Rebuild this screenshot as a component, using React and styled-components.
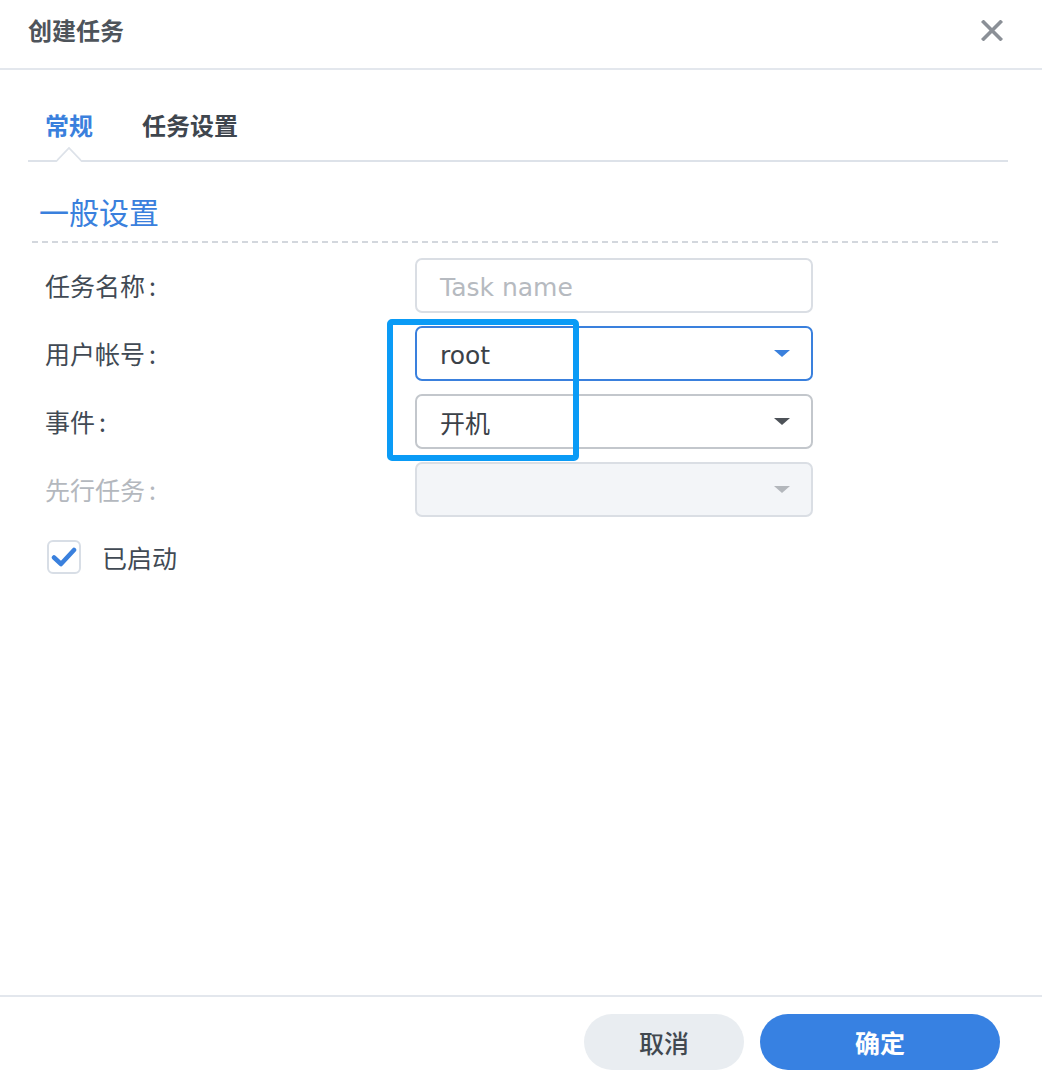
import React from 'react';
import styled, { createGlobalStyle } from 'styled-components';

const GlobalStyle = createGlobalStyle`
  html, body, #root {
    margin: 0;
    padding: 0;
    height: 100%;
    background: #ffffff;
  }
  body {
    font-family: "Noto Sans CJK SC", "Noto Sans", sans-serif;
    color: #414a54;
  }
  * {
    box-sizing: border-box;
  }
`;

const Dialog = styled.div`
  display: flex;
  flex-direction: column;
  height: 100vh;
  background: #ffffff;
`;

const Header = styled.div`
  display: flex;
  align-items: center;
  justify-content: space-between;
  height: 70px;
  padding: 0 39px 0 28px;
  border-bottom: 2px solid #e3e7ed;
  flex-shrink: 0;
`;

const Title = styled.div`
  font-size: 24px;
  font-weight: 700;
  color: #4e545b;
  line-height: 1;
  margin-top: -8px;
`;

const CloseButton = styled.button`
  display: flex;
  align-items: center;
  justify-content: center;
  width: 22px;
  height: 22px;
  padding: 0;
  margin-top: -8px;
  border: none;
  background: none;
  cursor: pointer;
`;

const Body = styled.div`
  flex: 1;
  padding: 18px 34px 0 28px;
`;

const TabBar = styled.div`
  display: flex;
  gap: 49px;
  height: 74px;
  padding-left: 17px;
  border-bottom: 2px solid #dde2e9;
`;

const Tab = styled.div`
  position: relative;
  display: flex;
  align-items: center;
  font-size: 24px;
  font-weight: 700;
  color: ${({ active }) => (active ? '#3a80dd' : '#3f464e')};
  cursor: pointer;
`;

const Notch = styled.svg`
  position: absolute;
  left: 50%;
  bottom: -2px;
  width: 25px;
  height: 15px;
  transform: translateX(-50%);
`;

const Section = styled.div`
  margin: 0 7px 0 4px;
`;

const SectionTitle = styled.div`
  margin-top: 28px;
  padding-left: 7px;
  font-size: 30px;
  line-height: 42px;
  color: #3a80dd;
`;

const DashedRule = styled.div`
  height: 2px;
  margin-top: 9px;
  background: repeating-linear-gradient(to right, #d3d7dd 0 6px, transparent 6px 10px);
`;

const Form = styled.div`
  position: relative;
  display: flex;
  flex-direction: column;
  gap: 13px;
  margin-top: 15px;
`;

const Row = styled.div`
  display: grid;
  grid-template-columns: 370px 398px;
  align-items: center;
  padding-left: 13px;
`;

const Label = styled.div`
  font-size: 25px;
  color: ${({ disabled }) => (disabled ? '#b4b8be' : '#414a54')};
  margin-top: -2px;
`;

const Colon = styled.span`
  margin-left: 4px;
`;

const Field = styled.div`
  display: flex;
  align-items: center;
  justify-content: space-between;
  height: 55px;
  padding: 0 21px 0 23px;
  border: 2px solid ${({ tone }) =>
    tone === 'focus' ? '#3a80dd' : tone === 'dark' ? '#c3c7cc' : '#dadee4'};
  border-radius: 7px;
  background: ${({ disabled }) => (disabled ? '#f3f5f8' : '#ffffff')};
`;

const FieldText = styled.span`
  font-family: ${({ latin }) => (latin ? '"DejaVu Sans", "Noto Sans CJK SC", sans-serif' : '"Noto Sans CJK SC", sans-serif')};
  font-size: 25px;
  color: ${({ placeholder }) => (placeholder ? '#b6bac0' : '#3b4148')};
  margin-top: ${({ latin }) => (latin ? '3px' : '0')};
`;

const Caret = styled.span`
  width: 0;
  height: 0;
  border-left: 8px solid transparent;
  border-right: 8px solid transparent;
  border-top: 7px solid ${({ color }) => color};
`;

const Highlight = styled.div`
  position: absolute;
  left: 355px;
  top: 61px;
  width: 192px;
  height: 142px;
  border: 6px solid #0a9bf6;
  border-radius: 5px;
  pointer-events: none;
`;

const CheckRow = styled.label`
  display: flex;
  align-items: center;
  gap: 21px;
  margin-top: 22px;
  padding-left: 15px;
  font-size: 25px;
  color: #414a54;
  cursor: pointer;
`;

const CheckBox = styled.span`
  display: flex;
  align-items: center;
  justify-content: center;
  width: 34px;
  height: 34px;
  border: 2px solid #d8dee6;
  border-radius: 6px;
  background: #ffffff;
`;

const Footer = styled.div`
  display: flex;
  justify-content: flex-end;
  gap: 16px;
  padding: 17px 42px 18px 0;
  border-top: 2px solid #e3e7ed;
  flex-shrink: 0;
`;

const Button = styled.button`
  width: ${({ primary }) => (primary ? '240px' : '160px')};
  height: 56px;
  border: none;
  border-radius: 28px;
  background: ${({ primary }) => (primary ? '#3781e2' : '#e9edf1')};
  color: ${({ primary }) => (primary ? '#ffffff' : '#414850')};
  font-family: "Noto Sans CJK SC", sans-serif;
  font-size: 25px;
  font-weight: ${({ primary }) => (primary ? 700 : 500)};
  cursor: pointer;
`;

const SelectField = ({ value, tone, caret, disabled, latin }) => (
  <Field tone={tone} disabled={disabled}>
    <FieldText latin={latin}>{value}</FieldText>
    <Caret color={caret} />
  </Field>
);

export default function App() {
  return (
    <>
      <GlobalStyle />
      <Dialog>
        <Header>
          <Title>创建任务</Title>
          <CloseButton aria-label="关闭">
            <svg width="22" height="21" viewBox="0 0 22 21">
              <path d="M2.5 2 L19.5 19 M19.5 2 L2.5 19" stroke="#8b9097" strokeWidth="3.6" strokeLinecap="square" />
            </svg>
          </CloseButton>
        </Header>

        <Body>
          <TabBar>
            <Tab active>
              常规
              <Notch viewBox="0 0 25 15">
                <polygon points="0,15 12.5,1 25,15" fill="#ffffff" />
                <polyline points="0,14 12.5,1 25,14" fill="none" stroke="#dde2e9" strokeWidth="1.8" />
              </Notch>
            </Tab>
            <Tab>任务设置</Tab>
          </TabBar>

          <Section>
            <SectionTitle>一般设置</SectionTitle>
            <DashedRule />

            <Form>
              <Row>
                <Label>任务名称<Colon>:</Colon></Label>
                <Field>
                  <FieldText latin placeholder>Task name</FieldText>
                </Field>
              </Row>
              <Row>
                <Label>用户帐号<Colon>:</Colon></Label>
                <SelectField value="root" tone="focus" caret="#3a80dd" latin />
              </Row>
              <Row>
                <Label>事件<Colon>:</Colon></Label>
                <SelectField value="开机" tone="dark" caret="#4d5258" />
              </Row>
              <Row>
                <Label disabled>先行任务<Colon>:</Colon></Label>
                <SelectField value="" disabled caret="#b3b7bc" />
              </Row>
              <Highlight />
            </Form>

            <CheckRow>
              <CheckBox>
                <svg width="26" height="22" viewBox="0 0 26 22">
                  <path d="M3 11.5 L10 18 L23 4" fill="none" stroke="#3a80dd" strokeWidth="4.5" strokeLinecap="round" strokeLinejoin="round" />
                </svg>
              </CheckBox>
              已启动
            </CheckRow>
          </Section>
        </Body>

        <Footer>
          <Button>取消</Button>
          <Button primary>确定</Button>
        </Footer>
      </Dialog>
    </>
  );
}
